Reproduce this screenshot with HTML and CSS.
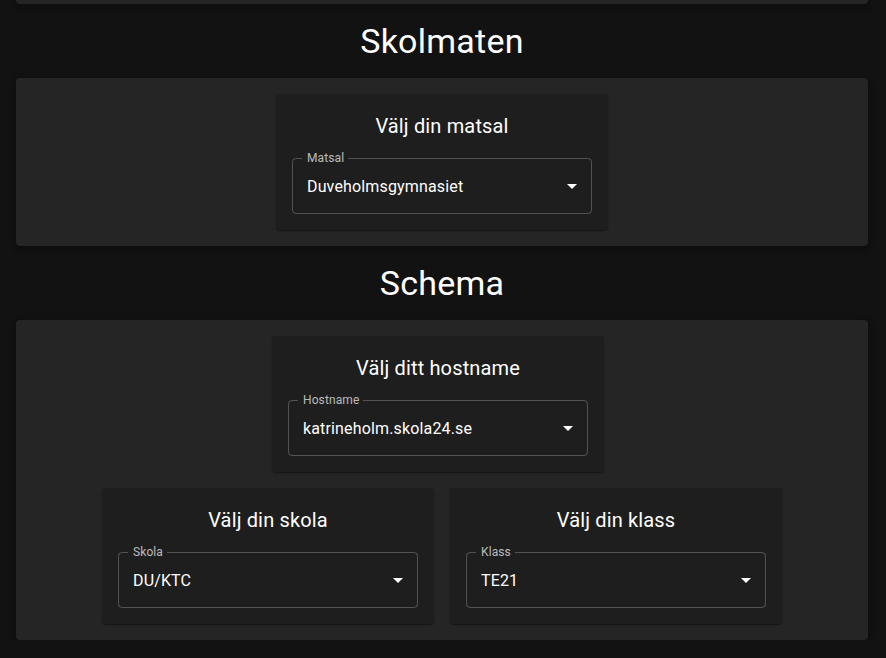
FILE: index.html
```html
<!DOCTYPE html>
<html lang="sv">
<head>
<meta charset="utf-8">
<title>Inställningar</title>
<link rel="stylesheet" href="styles.css">
</head>
<body>
<div class="page">
  <div class="panel panel-tail"></div>

  <h2 class="heading">Skolmaten</h2>
  <section class="panel">
    <div class="row">
      <div class="card">
        <h3 class="card-title">Välj din matsal</h3>
        <div class="select">
          <span class="select-label">Matsal</span>
          <span class="select-value">Duveholmsgymnasiet</span>
          <svg class="select-icon" viewBox="0 0 24 24" width="24" height="24"><path d="M7 10l5 5 5-5z"/></svg>
        </div>
      </div>
    </div>
  </section>

  <h2 class="heading">Schema</h2>
  <section class="panel panel-schema">
    <div class="row row-host">
      <div class="card">
        <h3 class="card-title">Välj ditt hostname</h3>
        <div class="select">
          <span class="select-label">Hostname</span>
          <span class="select-value">katrineholm.skola24.se</span>
          <svg class="select-icon" viewBox="0 0 24 24" width="24" height="24"><path d="M7 10l5 5 5-5z"/></svg>
        </div>
      </div>
    </div>
    <div class="row">
      <div class="card">
        <h3 class="card-title">Välj din skola</h3>
        <div class="select">
          <span class="select-label">Skola</span>
          <span class="select-value">DU/KTC</span>
          <svg class="select-icon" viewBox="0 0 24 24" width="24" height="24"><path d="M7 10l5 5 5-5z"/></svg>
        </div>
      </div>
      <div class="card">
        <h3 class="card-title">Välj din klass</h3>
        <div class="select">
          <span class="select-label">Klass</span>
          <span class="select-value">TE21</span>
          <svg class="select-icon" viewBox="0 0 24 24" width="24" height="24"><path d="M7 10l5 5 5-5z"/></svg>
        </div>
      </div>
    </div>
  </section>
</div>
</body>
</html>
```

FILE: styles.css
```css
* { box-sizing: border-box; }

html, body {
  margin: 0;
  padding: 0;
  background: #121212;
  color: #ffffff;
  font-family: Roboto, "Noto Sans", "Liberation Sans", sans-serif;
}

.page {
  padding: 0 18px 0 16px;
}

.panel {
  background: #252525;
  border-radius: 4px;
  padding: 16px;
  box-shadow: 0 3px 3px -2px rgba(0,0,0,0.2), 0 3px 4px 0 rgba(0,0,0,0.14), 0 1px 8px 0 rgba(0,0,0,0.12);
}

.panel-tail {
  height: 4px;
  padding: 0;
  border-radius: 0 0 4px 4px;
}

.heading {
  margin: 16px 0;
  font-size: 34px;
  line-height: 42px;
  font-weight: 400;
  letter-spacing: 0.25px;
  text-align: center;
}

.panel-schema {
  display: flex;
  flex-direction: column;
  gap: 16px;
}

.row {
  display: flex;
  justify-content: center;
  gap: 16px;
}

.row-host {
  padding-right: 8px;
}

.card {
  background: #1e1e1e;
  border-radius: 4px;
  padding: 16px;
  box-shadow: 0 2px 1px -1px rgba(0,0,0,0.2), 0 1px 1px 0 rgba(0,0,0,0.14), 0 1px 3px 0 rgba(0,0,0,0.12);
}

.card-title {
  margin: 0 0 16px;
  font-size: 20px;
  line-height: 32px;
  font-weight: 400;
  letter-spacing: 0.15px;
  text-align: center;
}

.select {
  position: relative;
  width: 300px;
  height: 56px;
  border: 1px solid rgba(255,255,255,0.23);
  border-radius: 4px;
  display: flex;
  align-items: center;
  padding: 0 14px;
}

.select-label {
  position: absolute;
  left: 9px;
  top: -9px;
  padding: 0 4px 0 5px;
  font-size: 12px;
  line-height: 16px;
  letter-spacing: 0.1px;
  color: rgba(255,255,255,0.7);
  background: #1e1e1e;
}

.select-value {
  font-size: 16px;
  line-height: 23px;
  letter-spacing: 0.15px;
}

.select-icon {
  position: absolute;
  right: 7px;
  top: 50%;
  margin-top: -12px;
  fill: #ffffff;
}
```
